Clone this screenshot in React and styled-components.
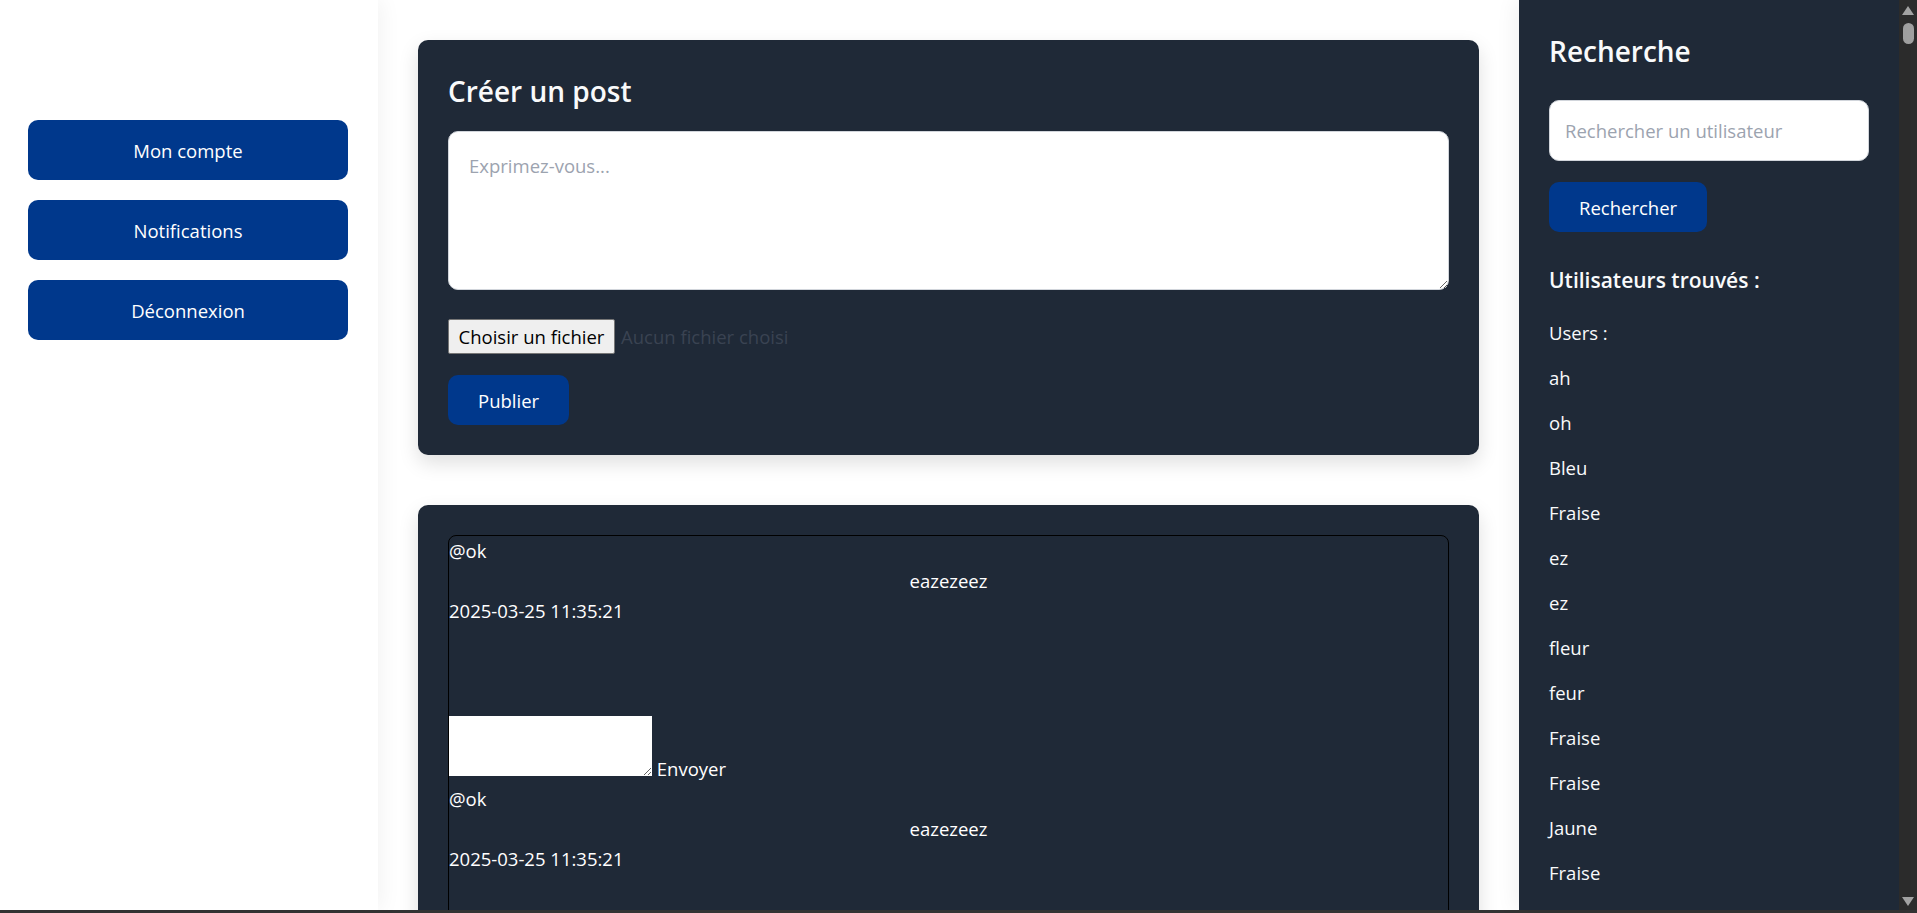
import React from 'react';
import styled, { createGlobalStyle } from 'styled-components';

const GlobalStyle = createGlobalStyle`
  * { box-sizing: border-box; }
  html, body { margin: 0; padding: 0; height: 100%; overflow: hidden; }
  body {
    font-family: 'Open Sans', 'Noto Sans', sans-serif;
    background: #ffffff;
    color: #111827;
  }
  #root { height: 100%; }
`;

const BLUE = '#00388c';
const DARK = '#1f2937';

const Screen = styled.div`
  height: 100vh;
  display: flex;
  flex-direction: column;
`;

const Window = styled.div`
  flex: 1;
  min-height: 0;
  display: flex;
`;

const FrameEdge = styled.div`
  height: 3px;
  background: #333333;
`;

/* colonne de gauche */
const LeftNav = styled.nav`
  position: relative;
  z-index: 2;
  width: 378px;
  flex-shrink: 0;
  background: #ffffff;
  box-shadow: 4px 0 20px rgba(0, 0, 0, 0.05);
  padding: 120px 30px 0 28px;
  display: flex;
  flex-direction: column;
  gap: 20px;
`;

const NavButton = styled.button`
  height: 60px;
  width: 100%;
  border: none;
  border-radius: 10px;
  background: ${BLUE};
  color: #ffffff;
  font-family: inherit;
  font-size: 18.5px;
  line-height: 25px;
  cursor: pointer;
`;

/* fil central */
const Feed = styled.main`
  flex: 1;
  min-width: 0;
  padding: 40px;
  display: flex;
  flex-direction: column;
  gap: 50px;
  overflow: hidden;
  background: #ffffff;
`;

const Card = styled.section`
  flex-shrink: 0;
  background: ${DARK};
  border-radius: 10px;
  padding: 30px;
  box-shadow: 0 8px 20px rgba(0, 0, 0, 0.13);
  color: #f9fafb;
`;

const CardTitle = styled.h2`
  margin: 1px 0 20px;
  font-size: 28px;
  font-weight: 600;
  line-height: 40px;
`;

const Composer = styled.textarea`
  display: block;
  width: 100%;
  height: 159px;
  border: 1px solid #d1d5db;
  border-radius: 10px;
  padding: 21px 20px;
  font-family: inherit;
  font-size: 18.5px;
  background: #ffffff;
  resize: vertical;
  &::placeholder { color: #9ca3af; }
`;

const FileRow = styled.div`
  margin-top: 29px;
  display: flex;
  align-items: center;
  gap: 6px;
`;

const FileButton = styled.label`
  width: 167px;
  height: 35px;
  display: flex;
  align-items: center;
  justify-content: center;
  background: #efefef;
  border: 1px solid #767676;
  border-radius: 2px;
  color: #000000;
  font-size: 18.5px;
  cursor: pointer;
`;

const FileName = styled.span`
  color: #3a4352;
  font-size: 18.5px;
`;

const PrimaryButton = styled.button`
  display: block;
  margin-top: ${({ $top }) => $top || 0}px;
  border: none;
  border-radius: 10px;
  background: ${BLUE};
  color: #ffffff;
  padding: 12.5px 30px;
  font-family: inherit;
  font-size: 18.5px;
  line-height: 25px;
  cursor: pointer;
`;

const PostList = styled.div`
  border: 1px solid #000000;
  border-radius: 8px;
  font-size: 18.5px;
  line-height: 30px;
  color: #ffffff;
`;

const Author = styled.div``;

const PostText = styled.div`
  text-align: center;
`;

const PostDate = styled.div``;

const PostMedia = styled.div`
  height: 90px;
`;

const CommentRow = styled.div``;

const CommentInput = styled.textarea`
  width: 203px;
  height: 60px;
  margin: 0;
  border: none;
  background: #ffffff;
  font-family: inherit;
  font-size: 16px;
`;

const SendButton = styled.button`
  background: none;
  border: none;
  padding: 0;
  color: #ffffff;
  font-family: inherit;
  font-size: inherit;
  line-height: inherit;
  cursor: pointer;
`;

/* colonne de recherche */
const SearchPanel = styled.aside`
  position: relative;
  z-index: 2;
  width: 380px;
  flex-shrink: 0;
  background: ${DARK};
  box-shadow: -4px 0 20px rgba(0, 0, 0, 0.06);
  padding: 31px 30px 0;
  color: #f9fafb;
  overflow: hidden;
`;

const PanelTitle = styled.h2`
  margin: 0 0 29px;
  font-size: 28px;
  font-weight: 600;
  line-height: 40px;
`;

const SearchInput = styled.input`
  display: block;
  width: 100%;
  height: 61px;
  border: 1px solid #d1d5db;
  border-radius: 10px;
  padding: 0 15px;
  font-family: inherit;
  font-size: 18.5px;
  margin-bottom: 21px;
  &::placeholder { color: #9ca3af; }
`;

const ResultsTitle = styled.h3`
  margin: 34px 0 26px;
  font-size: 21px;
  font-weight: 600;
  line-height: 28px;
`;

const UserItem = styled.p`
  margin: 0 0 20px;
  font-size: 18.5px;
  line-height: 25px;
`;

/* barre de défilement */
const Scrollbar = styled.div`
  width: 18px;
  flex-shrink: 0;
  background: #2c2c2c;
  display: flex;
  flex-direction: column;
  align-items: center;
  padding: 6px 0 4px;
`;

const Arrow = styled.div`
  width: 0;
  height: 0;
  border-left: 6px solid transparent;
  border-right: 6px solid transparent;
  ${({ $down }) => ($down ? 'border-top: 9px solid #a3a3a3;' : 'border-bottom: 9px solid #a3a3a3;')}
`;

const Thumb = styled.div`
  margin-top: 8px;
  width: 11px;
  height: 21px;
  border-radius: 6px;
  background: #a0a0a0;
`;

const Spacer = styled.div`
  flex: 1;
`;

const users = ['ah', 'oh', 'Bleu', 'Fraise', 'ez', 'ez', 'fleur', 'feur', 'Fraise', 'Fraise', 'Jaune', 'Fraise'];

const posts = [
  { author: '@ok', text: 'eazezeez', date: '2025-03-25 11:35:21', comment: true },
  { author: '@ok', text: 'eazezeez', date: '2025-03-25 11:35:21', comment: false },
];

const App = () => {
  return (
    <>
      <GlobalStyle />
      <Screen>
        <Window>
          <LeftNav>
            <NavButton>Mon compte</NavButton>
            <NavButton>Notifications</NavButton>
            <NavButton>Déconnexion</NavButton>
          </LeftNav>

          <Feed>
            <Card>
              <CardTitle>Créer un post</CardTitle>
              <Composer placeholder="Exprimez-vous..." />
              <FileRow>
                <FileButton>Choisir un fichier</FileButton>
                <FileName>Aucun fichier choisi</FileName>
              </FileRow>
              <PrimaryButton $top={21}>Publier</PrimaryButton>
            </Card>

            <Card>
              <PostList>
                {posts.map((post, i) => (
                  <div key={i}>
                    <Author>{post.author}</Author>
                    <PostText>{post.text}</PostText>
                    <PostDate>{post.date}</PostDate>
                    <PostMedia />
                    {post.comment && (
                      <CommentRow>
                        <CommentInput />{' '}
                        <SendButton>Envoyer</SendButton>
                      </CommentRow>
                    )}
                  </div>
                ))}
              </PostList>
            </Card>
          </Feed>

          <SearchPanel>
            <PanelTitle>Recherche</PanelTitle>
            <SearchInput placeholder="Rechercher un utilisateur" />
            <PrimaryButton>Rechercher</PrimaryButton>
            <ResultsTitle>Utilisateurs trouvés :</ResultsTitle>
            <UserItem>Users :</UserItem>
            {users.map((u, i) => (
              <UserItem key={i}>{u}</UserItem>
            ))}
          </SearchPanel>

          <Scrollbar>
            <Arrow />
            <Thumb />
            <Spacer />
            <Arrow $down />
          </Scrollbar>
        </Window>
        <FrameEdge />
      </Screen>
    </>
  );
};

export default App;
